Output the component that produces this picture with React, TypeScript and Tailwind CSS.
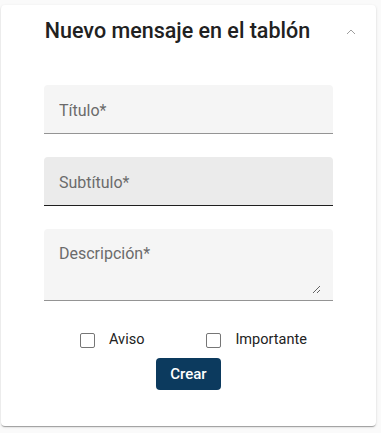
import React, { useState } from 'react';

const Check: React.FC<{ label: string; checked: boolean; onToggle: () => void }> = ({ label, checked, onToggle }) => (
  <label className="flex items-center gap-[14px] cursor-pointer select-none" onClick={onToggle}>
    <span
      className={`w-[15px] h-[15px] rounded-[2px] border ${
        checked ? 'bg-[#0c3a5e] border-[#0c3a5e]' : 'bg-white border-[#767676]'
      }`}
    />
    <span className="text-[14.5px] text-[#222]">{label}</span>
  </label>
);

const App: React.FC = () => {
  const [aviso, setAviso] = useState(false);
  const [importante, setImportante] = useState(false);

  return (
    <div className="min-h-screen bg-[#fafafa] pt-[5px] pl-[1px]" style={{ fontFamily: 'Roboto, "Liberation Sans", sans-serif' }}>
      <div className="w-[375px] h-[421px] bg-white rounded-[4px] shadow-[0_2px_1px_-1px_rgba(0,0,0,0.2),0_1px_1px_0_rgba(0,0,0,0.14),0_1px_3px_0_rgba(0,0,0,0.12)] flex flex-col">
        <div className="h-[52px] flex items-center pl-[16px] pr-[20px]">
          <h2 className="flex-1 text-center text-[21.5px] font-medium text-[#212121]">Nuevo mensaje en el tablón</h2>
          <svg width="10" height="6" viewBox="0 0 10 6" className="ml-[8px] mt-[2px]">
            <polyline points="1,5 5,1 9,5" fill="none" stroke="#9e9e9e" strokeWidth="1" />
          </svg>
        </div>

        <div className="flex flex-col items-center pt-[28px]">
          <div className="w-[289px] flex flex-col gap-[23px]">
            <input
              placeholder="Título*"
              className="h-[49px] w-full rounded-t-[4px] bg-[#f5f5f5] border-b border-[#949494] pl-[15px] pt-[2px] text-[16px] text-[#222] placeholder:text-[#6b6b6b] outline-none"
            />
            <input
              placeholder="Subtítulo*"
              className="h-[49px] w-full rounded-t-[4px] bg-[#ebebeb] border-b border-[#1f1f1f] pl-[15px] pt-[2px] text-[16px] text-[#222] placeholder:text-[#6b6b6b] outline-none"
            />
            <div className="w-full rounded-t-[4px] bg-[#f5f5f5] border-b border-[#949494] pl-[15px] pr-[12px] pt-[13px] pb-[6px]">
              <textarea
                placeholder="Descripción*"
                className="block w-full h-[52px] bg-transparent resize-y text-[16px] leading-[23px] text-[#222] placeholder:text-[#6b6b6b] outline-none"
              />
            </div>
          </div>

          <div className="w-full h-[24px] mt-[27px] flex items-center pl-[79px] gap-[62px]">
            <Check label="Aviso" checked={aviso} onToggle={() => setAviso(!aviso)} />
            <Check label="Importante" checked={importante} onToggle={() => setImportante(!importante)} />
          </div>

          <button className="mt-[6px] h-[32px] px-[14px] rounded-[4px] bg-[#0c3a5e] text-white text-[15px] font-medium">
            Crear
          </button>
        </div>
      </div>
    </div>
  );
};

export default App;
